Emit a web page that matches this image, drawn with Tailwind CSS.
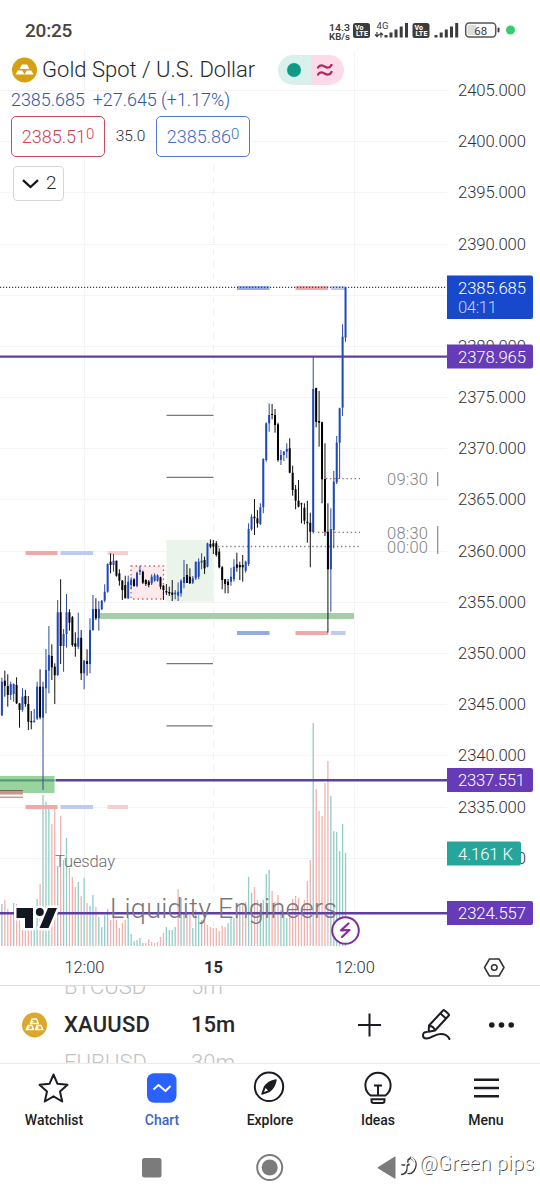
<!DOCTYPE html>
<html lang="en">
<head>
<meta charset="utf-8">
<title>XAUUSD chart</title>
<script src="https://cdn.jsdelivr.net/npm/@tailwindcss/browser@4"></script>
</head>
<body class="bg-white">
<div class="relative flex h-[1200px] w-[540px] flex-col overflow-hidden bg-white font-['Roboto',sans-serif] text-[#2a2c33]">

  <!-- Status bar -->
  <div class="flex h-[50px] shrink-0 items-start justify-between pl-[25px]">
    <div class="pt-[19px] text-[19px] leading-6 font-medium tracking-[-0.2px] text-[#444]">20:25</div>
    <svg class="h-[50px] w-[215px] shrink-0" viewBox="325 0 215 50" font-family="Roboto, sans-serif" fill="#3c3c3c">
      <g font-size="9.5" font-weight="600">
        <text x="329" y="30.5" textLength="21" lengthAdjust="spacingAndGlyphs">14.3</text>
        <text x="329" y="39.5" textLength="21" lengthAdjust="spacingAndGlyphs">KB/s</text>
      </g>
      <rect x="353" y="23" width="17" height="15" rx="2.5"/>
      <rect x="412.500" y="23" width="17" height="15" rx="2.5"/>
      <g fill="#fff" font-size="7" font-weight="800">
        <text x="355" y="29.800">Vo</text><text x="356" y="36.300" textLength="12">LTE</text>
        <text x="414.500" y="29.800">Vo</text><text x="415.500" y="36.300" textLength="12">LTE</text>
      </g>
      <text x="376.500" y="28.800" font-size="9.500" textLength="12">4G</text>
      <path d="M377 32v4M375 34.500l2 2.200 2-2.200M381 37.500v-4M379.500 35l1.500-2 2 2" stroke="#3c3c3c" stroke-width="1.200" fill="none"/>
      <path d="M384.500 35h3v2.500h-3zM389.500 32.500h3v5h-3zM394.500 29.500h3v8h-3zM399.700 26.500h3v11h-3zM405 23h3v14.500h-3z"/>
      <path d="M434.500 35h3v2.500h-3zM439.700 32.500h3v5h-3zM444.800 29.500h3v8h-3zM450 26.500h3v11h-3zM455.200 23h3v14.500h-3z"/>
      <rect x="465.700" y="23" width="30" height="14" rx="3.500" fill="#fff" stroke="#555" stroke-width="1.500"/>
      <path d="M469 25h7v10h-7a1.500 1.500 0 0 1-1.500-1.500v-7a1.500 1.500 0 0 1 1.500-1.500z" fill="#ddd"/>
      <rect x="497.500" y="27.500" width="2" height="5" rx="1"/>
      <text x="480.700" y="34.500" font-size="11.500" text-anchor="middle">68</text>
      <circle cx="510.500" cy="30" r="4.500" fill="#35cf6a"/>
    </svg>
  </div>

  <!-- Price chart -->
  <div class="relative h-[935px] shrink-0">
    <svg id="chart" class="block h-[935px] w-[540px]" viewBox="0 50 540 935" font-family="Roboto, sans-serif">
      <g id="grid" stroke="#f4f4f4" stroke-width="1"></g>
      <path d="M213.500 165V946" stroke="#f0f0f2" stroke-dasharray="6 6"/>
      <g id="volume"></g>
      <!-- session zones -->
      <rect x="166.500" y="540" width="47" height="61.500" fill="#eaf4ea"/>
      <rect x="131" y="566" width="32.500" height="33" fill="#fdeaec" stroke="#d9606a" stroke-width="1.300" stroke-dasharray="1.500 3"/>
      <g stroke="#77777c" stroke-width="1.300">
        <path d="M166.500 415.300H213.500M166.500 477.300H213.500M166.500 663.600H213M166.500 725.800H212.500"/>
      </g>
      <rect x="100" y="613" width="254" height="6" fill="#a2cfa8"/>
      <rect x="0" y="776" width="54.500" height="17" fill="#98d3a0"/>
      <path d="M0 780.300H54.500" stroke="#5a9a76" stroke-width="2.200"/>
      <rect x="0" y="790" width="23" height="4.500" fill="#bd9a8c"/>
      <path d="M0 797.300H23" stroke="#cf9694" stroke-width="1.500"/>
      <path d="M0 790.500H23" stroke="#7a6658" stroke-width="1"/>
      <g fill="#f0a9a8">
        <rect x="25.500" y="551" width="32" height="4"/><rect x="25.500" y="805" width="32" height="4"/>
        <rect x="295.500" y="286" width="32.500" height="4"/><rect x="295.500" y="631" width="32.500" height="4"/>
      </g>
      <g fill="#f8cfcf"><rect x="107.500" y="551" width="20.500" height="4"/><rect x="107.500" y="805" width="20.500" height="4"/></g>
      <g fill="#bccbf2">
        <rect x="60.500" y="551" width="32.500" height="4"/><rect x="60.500" y="805" width="32.500" height="4"/>
        <rect x="331" y="286" width="14.500" height="4"/><rect x="331" y="631" width="14.500" height="4"/>
      </g>
      <g fill="#94abe4"><rect x="237" y="286" width="32.500" height="4"/><rect x="237" y="631" width="32.500" height="4"/></g>
      <g stroke-width="1.300" stroke-dasharray="1.300 2.800" fill="none">
        <path d="M218 546.500H360" stroke="#77777c"/>
        <path d="M318 532.400H360" stroke="#a85f68"/>
        <path d="M326 478.700H360" stroke="#8a6670"/>
      </g>
      <g id="candles"></g>
      <path d="M0 287.400H447" stroke="#34406a" stroke-width="1.200" stroke-dasharray="1.200 1.800"/>
      <g stroke="#5f3ea4" stroke-width="2.400">
        <path d="M0 356.600H447M55.500 780.200H447M0 913.200H447"/>
      </g>
      <g fill="#828286" font-size="16.500" font-weight="300">
        <text x="387" y="484.500" textLength="41">09:30</text>
        <text x="387" y="538.500" textLength="41">08:30</text>
        <text x="387" y="552.500" textLength="41">00:00</text>
      </g>
      <path d="M437.700 472v14M437.700 526v28" stroke="#8a8a8e" stroke-width="1.200"/>
      <text x="55" y="866.700" font-size="16.500" font-weight="300" fill="#6c6c70" textLength="60">Tuesday</text>
      <text x="110" y="918.400" font-size="27" font-weight="300" fill="#77777c" textLength="227">Liquidity Engineers</text>
      <!-- TradingView mark -->
      <g id="mark" stroke-linejoin="round">
        <g fill="#fff" stroke="#fff" stroke-width="5"><path d="M16.500 908H33V928H25V918H16.500zM48 908H57L48.500 928H39.500z"/><circle cx="39.800" cy="912" r="4"/></g>
        <g fill="#131722"><path d="M16.500 908H33V928H25V918H16.500zM48 908H57L48.500 928H39.500z"/><circle cx="39.800" cy="912" r="4"/></g>
      </g>
      <circle cx="345.500" cy="930.500" r="13.300" fill="#fff" stroke="#7b2f9c" stroke-width="2"/>
      <path d="M348.500 923.500l-7.500 6.800 8.500-.3-7.500 7" fill="none" stroke="#8a2aa0" stroke-width="2.200" stroke-linejoin="round" stroke-linecap="round"/>
      <!-- price axis -->
      <g id="axis" fill="#303136" font-size="16.700" font-weight="300"></g>
      <path d="M447 275.500h84q2 0 2 2v39.500q0 2-2 2h-84z" fill="#1848cc"/>
      <path d="M447 344.500h84q2 0 2 2v20q0 2-2 2h-84zM447 768h84q2 0 2 2v20q0 2-2 2h-84zM447 901h84q2 0 2 2v20q0 2-2 2h-84z" fill="#673ab7"/>
      <path d="M447 841.500h72q2 0 2 2v20q0 2-2 2h-72z" fill="#26a69a"/>
      <g fill="#fff" font-size="16.700" font-weight="300">
        <text x="458" y="293.500" textLength="68">2385.685</text>
        <text x="458" y="313.200" textLength="39" fill="#c4d2f8">04:11</text>
        <text x="458" y="362.700" textLength="68">2378.965</text>
        <text x="458" y="786.200" textLength="67">2337.551</text>
        <text x="458" y="859.700" textLength="55">4.161 K</text>
        <text x="458" y="919.200" textLength="68">2324.557</text>
      </g>
      <!-- time axis -->
      <g fill="#2b2c31" font-size="16.500" text-anchor="middle">
        <text x="84.500" y="973" font-weight="300">12:00</text>
        <text x="213.500" y="973" font-weight="700">15</text>
        <text x="354.800" y="973" font-weight="300">12:00</text>
      </g>
      <path d="M489.500 959h9.500l5 8.500-5 8.500h-9.500l-5-8.500z" fill="none" stroke="#333" stroke-width="1.500" stroke-linejoin="round"/>
      <circle cx="494.300" cy="967.500" r="2.800" fill="none" stroke="#333" stroke-width="1.500"/>
    </svg>

    <!-- Symbol legend over the chart -->
    <div class="absolute top-0 left-0 flex w-[350px] flex-col pl-[11px]">
      <div class="flex h-10 items-center">
        <svg class="size-[26px] shrink-0" viewBox="0 0 26 26"><circle cx="13.500" cy="13" r="12.500" fill="#d5a012"/><path d="M11 7.500h5l2.500 4.500H8.500zM6.800 13.500h4.500l2.200 4H4.500zM15.700 13.500h4.500l2.500 4h-9.200z" fill="#fff"/></svg>
        <div class="ml-[5px] w-[215px] text-[22px] leading-7 font-light whitespace-nowrap text-[#26272c]">Gold Spot / U.S. Dollar</div>
        <div class="ml-[20.500px] flex h-[30px] w-[66px] shrink-0 overflow-hidden rounded-full">
          <div class="flex w-1/2 items-center justify-center bg-[#d9f0ec]"><div class="size-[14px] rounded-full bg-[#0f9b83]"></div></div>
          <div class="flex w-1/2 items-center justify-center bg-[#fbdbe8]">
            <svg class="mr-1 h-4 w-4" viewBox="0 0 16 16" fill="none" stroke="#b4265e" stroke-width="2.200"><path d="M1 6.500V5.500c2-3.500 5-2 7-.8s5 1.500 6.500-1.700V2M1 13.500v-1c2-3.500 5-2 7-.8s5 1.500 6.500-1.700V9"/></svg>
          </div>
        </div>
      </div>
      <div class="h-[26px] text-[17.9px] leading-[19px] font-light whitespace-nowrap text-[#2f57a8]"><span>2385.685</span><span class="ml-2">+27.645 (+1.17%)</span></div>
      <div class="flex items-center">
        <div class="flex h-[41px] w-[94px] items-center justify-center rounded-[5px] border border-[#c64a5e] bg-white text-[18px] font-light text-[#d2404f]">2385.51<span class="mb-1 text-[15px]">0</span></div>
        <div class="w-[51px] text-center text-[15.5px] font-light">35.0</div>
        <div class="flex h-[41px] w-[94px] items-center justify-center rounded-[5px] border border-[#5079cc] bg-white text-[18px] font-light text-[#3f6bc9]">2385.86<span class="mb-1 text-[15px]">0</span></div>
      </div>
      <div class="mt-[9px] ml-[1.5px] flex h-[35px] w-[51px] items-center rounded border border-[#d5d6da] bg-white pl-[8.5px]">
        <svg class="h-[10px] w-[17px]" viewBox="0 0 17 10" fill="none" stroke="#15161a" stroke-width="2.300"><path d="M1 1.200l7.500 6.800 7.500-6.800"/></svg>
        <span class="ml-[7px] text-[19px] font-light">2</span>
      </div>
    </div>
  </div>

  <!-- Symbol / interval wheel -->
  <div class="flex h-[79px] shrink-0 items-center overflow-hidden border-y border-t-[#dcdde0] border-b-[#ececee] text-[22px] leading-[38px]">
    <svg class="ml-[21px] size-[26px] shrink-0" viewBox="0 0 26 26"><circle cx="13.500" cy="13" r="12.500" fill="#dba82c"/><g fill="none" stroke="#fff" stroke-width="1.400" stroke-linejoin="round"><path d="M11 7h4.500l1.800 4.500H9.500zM7 13.500h4l1.500 4H5.200zM16 13.500h4l1.800 4h-7.300zM9.500 11l3-2M5.500 17l3-2M14.500 17l3-2"/></g></svg>
    <div class="ml-[17px] flex w-[127px] flex-col">
      <span class="h-[38px] font-light text-[#c2c2c4]">BTCUSD</span>
      <span class="h-[38px] font-medium tracking-[0.2px] text-[#26272c]">XAUUSD</span>
      <span class="h-[38px] font-light text-[#c2c2c4]">EURUSD</span>
    </div>
    <div class="flex w-[164px] flex-col">
      <span class="h-[38px] font-light text-[#c2c2c4]">5m</span>
      <span class="h-[38px] font-medium text-[#26272c]">15m</span>
      <span class="h-[38px] font-light text-[#c2c2c4]">30m</span>
    </div>
    <svg class="h-[78px] w-[185px] shrink-0" viewBox="355 986 185 78" fill="none" stroke="#1c1d22" stroke-width="2" stroke-linecap="round" stroke-linejoin="round">
      <path d="M369.500 1013.500v23M358 1025h23" stroke-linecap="butt"/>
      <path d="M429 1025.500L443 1010.500q.8-.8 1.600 0l4 3.600q.8.800 0 1.600L435 1030.500l-6.300 1.200zM429.500 1026q4 0 5.500 4.500M440.500 1013.500l5.500 5"/>
      <path d="M427 1032q-4-.2-4 3.500 0 3 3.500 3c5 0 8-4.500 14-4.500 4.500 0 7.500 1.500 9 5"/>
      <g fill="#1c1d22" stroke="none"><circle cx="491.800" cy="1025" r="2.800"/><circle cx="501.500" cy="1025" r="2.800"/><circle cx="511.200" cy="1025" r="2.800"/></g>
    </svg>
  </div>

  <!-- Tab bar -->
  <div class="grid h-[72px] shrink-0 grid-cols-5 text-center text-[14px] leading-5 font-medium text-[#1c1d22]">
    <div class="flex flex-col items-center"><svg class="mt-[7px] h-[34px] w-[34px]" viewBox="0 0 34 34" fill="none" stroke="#1c1d22" stroke-width="2" stroke-linejoin="round"><path d="M16.500 3.500l4 9.300 10 1-7.500 6.700 2.200 10-8.700-5.200-8.700 5.200 2.200-10-7.500-6.700 10-1z"/></svg><span class="mt-[5px]">Watchlist</span></div>
    <div class="flex flex-col items-center text-[#3a66c8]"><svg class="mt-[7px] h-[34px] w-[34px]" viewBox="0 0 34 34"><rect x="2" y="2.300" width="29.500" height="29.500" rx="7" fill="#2962ff"/><path d="M8.500 18.500l5-4.500 7 6 5-5" fill="none" stroke="#fff" stroke-width="2" stroke-linejoin="round"/></svg><span class="mt-[5px]">Chart</span></div>
    <div class="flex flex-col items-center"><svg class="mt-[7px] h-[34px] w-[34px]" viewBox="0 0 34 34"><circle cx="16" cy="15.800" r="14.200" fill="none" stroke="#1c1d22" stroke-width="2"/><path d="M23 9q-8 1.500-11.500 7L9 23l7-2.500Q21.500 17 23 9z" fill="#1c1d22" stroke="#1c1d22" stroke-width="1.500" stroke-linejoin="round"/><path d="M11 21l1.500-4 2.500 2.500z" fill="#fff"/></svg><span class="mt-[5px]">Explore</span></div>
    <div class="flex flex-col items-center"><svg class="mt-[7px] h-[34px] w-[34px]" viewBox="0 0 34 34" fill="none" stroke="#1c1d22" stroke-width="2"><path d="M9.500 24.500A12.600 12.600 0 1 1 24.500 24.500zM13 14.500h8M17 14.500v10"/><path d="M10.500 28.200h13v1.500q0 2.300-2.300 2.300h-8.400q-2.300 0-2.300-2.300z"/></svg><span class="mt-[5px]">Ideas</span></div>
    <div class="flex flex-col items-center"><svg class="mt-[7px] h-[34px] w-[34px]" viewBox="0 0 34 34" stroke="#1c1d22" stroke-width="2.500"><path d="M5 8.700h25M5 17h25M5 25.300h25"/></svg><span class="mt-[5px]">Menu</span></div>
  </div>

  <!-- System navigation -->
  <svg class="h-[64px] w-[540px] shrink-0" viewBox="0 1136 540 64" font-family="Roboto, sans-serif">
    <rect x="142" y="1158" width="19.500" height="19.500" rx="2.500" fill="#7b7b7b"/>
    <circle cx="269.700" cy="1167.500" r="12.500" fill="none" stroke="#7b7b7b" stroke-width="2"/><circle cx="269.700" cy="1167.500" r="8" fill="#7b7b7b"/>
    <path d="M395.500 1157v21q0 1-1 .5l-16.300-10q-.9-.8 0-1.500l16.300-10.300q1-.4 1 .3z" fill="#7b7b7b"/>
    <g id="credit" fill="none" stroke-linecap="round"><path d="M402 1174q5-1 4.500-7l1-7 3-2.500M402.500 1164.500h6M412 1158.500q5 3 3 9t-6.500 5.500" stroke="#3c3c3c" stroke-width="2.400"/><path d="M401.300 1173q5-1 4.500-7l1-7 3-2.500M401.800 1163.500h6M411.300 1157.800q5 3 3 9t-6.500 5.500" stroke="#fff" stroke-width="1.500"/></g>
    <text x="420.200" y="1171" font-size="20" font-weight="300" textLength="115" fill="#484848">@Green pips</text>
    <text x="419.200" y="1170" font-size="20" font-weight="300" textLength="115" fill="#fff">@Green pips</text>
  </svg>
</div>

<script>
const NS = 'http://www.w3.org/2000/svg';
const add = (id, tag, attrs, text) => {
  const el = document.createElementNS(NS, tag);
  for (const k in attrs) el.setAttribute(k, attrs[k]);
  if (text) el.textContent = text;
  document.getElementById(id).appendChild(el);
};
const barX = i => 1.9 + 2.937 * i;

for (let k = 0; k < 16; k++) {
  const y = 90 + 51.18 * k;
  add('grid', 'path', { d: `M0 ${Math.round(y)}.5H447` });
  add('axis', 'text', { x: 458, y: y + 6, textLength: 68 }, (2405 - 5 * k) + '.000');
}
add('grid', 'path', { d: 'M84.500 50V946M354.500 50V946' });

// high, body top, body bottom, low, direction (b = up, k = down)
const bars = `677.7 681.7 715.3 716 b|670.7 680.7 686 696.7 k|674.3 686 695 706.7 k|681.7 684 695 700 b|683.3 684 694 701.7 b|677.3 685 703.3 704 k|703.3 703.3 710 727.7 k|688.3 696.7 710 711.7 b|690 696 704 706.7 k|696 704 721.7 730 k|711 721 722.3 729.3 k|709 720.7 722 722.7 b|681.7 686.7 718.7 720 b|669.3 686.7 717.3 719.3 k|681.7 686.7 717.7 790 b|649 670 688.3 713.3 b|626 655 670.7 693.3 b|644.3 656 667.3 680 k|663.3 666.7 675.3 704 k|600 612.3 675 676 b|579.3 612.3 646 664 k|629 634 646 671.7 b|594 612.3 634 647.7 b|609.3 612.3 622.7 630.7 k|616 617.3 645 646.7 k|632.3 643.3 646.7 656.7 k|612.7 637.7 646.7 649 b|630 637.7 673.3 680 k|660 660.7 673.3 689.3 b|649.3 661 664 675.7 k|618.3 630 664 673.3 b|595 609 630 630.7 b|598.3 609 618.3 620 k|601 609 618.3 630.7 b|600 600.7 609.3 610 b|584.3 591.7 600.7 602.3 b|563.3 564 591.7 592.7 b|553.3 561.7 565 573.3 k|554 560.7 565 571.7 b|560.7 560.7 575.7 576.7 k|569.3 573.3 580.7 585.7 k|580 580.7 590 600 k|575.7 585 598.3 598.3 k|575.7 581.7 598.3 599 b|577.3 580 585 589.3 b|578.3 579.3 586 586.7 k|571.7 572.7 586 587.3 b|565.7 570 571.7 575 b|570.7 571.7 582.7 584 k|579.3 580 584 586 k|580 581.7 585 587.3 k|574.3 576.7 583.3 585 b|573.3 575.3 580.7 581.7 b|574.3 575.3 580.7 581.7 b|576.7 577.3 586.7 589.3 k|585 585.7 590 600 k|584 591 592.5 595 k|586.7 592 593.5 596 k|580 592.5 595 601 k|590 592.7 594.3 599.3 b|582.3 591.7 595.7 601 b|579.3 580.7 593.3 596.7 b|560 577 583 588.3 b|564 575 583 580 k|568.3 576.7 583.3 584 k|576 578.3 582.7 584 b|561.7 561.7 578.3 580 b|558.3 561.7 576.7 579.3 b|553.3 560.7 562.7 569.3 b|556.7 560 568.3 574 k|542.7 543.3 566.7 567.3 b|539.3 544 546.7 548.3 k|540 543.3 546.7 554 k|541 543.3 555 556.7 k|548.3 551.7 567.3 568.3 k|566 567.3 580 589.3 k|579 579.3 584 593.3 k|579 581.7 585 593.3 k|567.7 576.7 581.7 585.7 b|559.3 566.7 579.3 581.7 b|552.7 564.3 567.7 571.7 k|561.7 565 567.3 580 k|555 565 567.3 581.7 k|560.7 561.7 570.7 572.7 b|523.3 529 564 566 b|514.3 516.7 529.3 530.7 b|499 516.7 518.3 535 k|510 518.3 523.3 527.7 k|503.3 507.3 524 525 b|458.3 459 507.3 513.3 b|422.3 423.3 460 461.7 b|403.3 415 423.3 431.7 b|404 414 415 419.3 k|409 415 425 432.7 k|422.7 424.3 460 461.7 k|450 455 460 465 b|451 451.7 455 461 b|443.3 449 451.7 458.3 b|438.3 448.3 472.7 473.3 k|465.7 472.7 490 495.7 k|485 489.3 500.7 509.3 k|480 500.7 506.7 507.3 k|502.7 503.3 504.3 523.3 k|503.3 507.7 520.7 524.3 k|500.7 521.7 523.3 542.7 k|512.7 522.7 531.7 567.3 k|356 389 532 533.5 b|387.7 388 422 427.3 k|391 421 422.7 446.7 k|421.7 422.3 479.3 503.3 k|443.3 479 531.7 536 k|503.3 531.7 569.3 632.7 k|508.3 529 569.3 611.7 b|471 481.7 530 548.3 b|436 442.7 482.3 484 b|407.7 408.3 442.7 479 b|324.3 336.7 407.7 416 b|287.300 287.300 337.7 341.7 b`.split('|');
bars.forEach((row, i) => {
  const [h, t, b, l, dir] = row.split(' ');
  const x = barX(i), up = dir === 'b';
  add('candles', 'path', { d: `M${x} ${h}V${l}`, stroke: up ? '#2c4a9c' : '#111', 'stroke-width': 1 });
  add('candles', 'rect', { x: x - 1, y: t, width: 2, height: Math.max(1, b - t), fill: up ? '#1f48bd' : '#000' });
});

// top edge of each volume column, g = up, r = down
const vol = `904g 900r 909r 913r 903g 904r 910r 930r 930r 930r 930r 929g 899g 884r 795g 802g 807g 824r 808r 866g 816r 860g 838g 868r 877r 887r 882g 896r 878g 903r 906g 895g 907r 917g 927g 915g 909g 920r 918r 920r 928r 923r 920r 918g 934g 941g 940g 938g 943g 943r 939r 942r 943r 942r 937r 933r 927g 930g 930g 927g 889r 898g 913g 913r 915r 928g 910g 915g 920g 920r 925r 927r 928r 928r 931r 926r 927r 923g 918g 918g 913r 904g 903r 902r 877g 893g 887r 900r 910g 900g 874g 870g 891r 902r 895r 910g 913g 918g 913r 899r 896r 898r 907r 900r 881r 860r 723g 789r 811r 816r 783r 761r 796g 831g 832g 851g 824g 853g`.split(' ');
vol.forEach((v, i) => {
  const y = parseInt(v, 10);
  add('volume', 'rect', { x: barX(i) - .65, y, width: 1.3, height: 946 - y, fill: v.endsWith('g') ? '#8fcdc6' : '#f3b0ae' });
});
</script>
</body>
</html>
